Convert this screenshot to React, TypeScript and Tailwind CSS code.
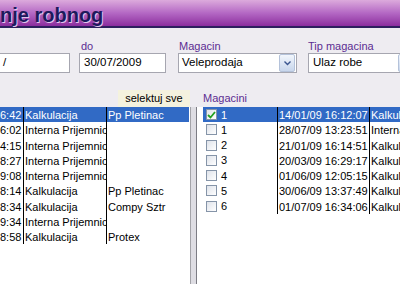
// Robno stanje - magacini / dokumenti prozor

const leftRows = [
  { time: '6:42', type: 'Kalkulacija', partner: 'Pp Pletinac' },
  { time: '6:02', type: 'Interna Prijemnica', partner: '' },
  { time: '4:15', type: 'Interna Prijemnica', partner: '' },
  { time: '8:27', type: 'Interna Prijemnica', partner: '' },
  { time: '9:08', type: 'Interna Prijemnica', partner: '' },
  { time: '8:14', type: 'Kalkulacija', partner: 'Pp Pletinac' },
  { time: '8:34', type: 'Kalkulacija', partner: 'Compy Sztr' },
  { time: '9:34', type: 'Interna Prijemnica', partner: '' },
  { time: '8:58', type: 'Kalkulacija', partner: 'Protex' },
];

const rightRows = [
  { checked: true, num: '1', date: '14/01/09 16:12:07', type: 'Kalkulacija' },
  { checked: false, num: '1', date: '28/07/09 13:23:51', type: 'Interna Prijemnica' },
  { checked: false, num: '2', date: '21/01/09 16:14:51', type: 'Kalkulacija' },
  { checked: false, num: '3', date: '20/03/09 16:29:17', type: 'Kalkulacija' },
  { checked: false, num: '4', date: '01/06/09 12:05:15', type: 'Kalkulacija' },
  { checked: false, num: '5', date: '30/06/09 13:37:49', type: 'Kalkulacija' },
  { checked: false, num: '6', date: '01/07/09 16:34:06', type: 'Kalkulacija' },
];

function ComboButton() {
  return (
    <div className="w-[16px] h-full mr-[1px] shrink-0 rounded-[2px] border border-[#b4c2da] bg-linear-to-b from-[#f2f6fc] to-[#c8d6ec] flex items-center justify-center">
      <svg width="9" height="6" viewBox="0 0 9 6">
        <polyline points="1.5,1.5 4.5,4.5 7.5,1.5" fill="none" stroke="#3a5590" strokeWidth="1.4" />
      </svg>
    </div>
  );
}

function Checkbox({ checked }: { checked: boolean }) {
  return (
    <div className="w-[11px] h-[11px] shrink-0 border border-[#8594a8] bg-linear-to-br from-[#dfe3ea] to-white flex items-center justify-center">
      {checked && (
        <svg width="9" height="8" viewBox="0 0 9 8">
          <polyline points="1,4 3.5,6.5 8,1" fill="none" stroke="#22a022" strokeWidth="1.8" />
        </svg>
      )}
    </div>
  );
}

export default function App() {
  return (
    <div className="w-[400px] h-[284px] overflow-hidden bg-[#eeecf1] flex flex-col font-['Liberation_Sans',Arial,sans-serif] text-black">
      {/* Title bar */}
      <div className="h-[28px] shrink-0 border-b-2 border-[#2d1f5e] bg-linear-to-b from-[#dcaadc] via-[#b468c4] to-[#8c2c9e] pt-[4px]">
        <div className="text-[20px] leading-[23px] font-bold text-[#1d195c] whitespace-nowrap [text-shadow:1px_1px_0_#e2c4ec]">
          nje robnog
        </div>
      </div>

      {/* Filter fields */}
      <div className="flex pt-[12px] text-[11px]">
        <div className="ml-[-11px] w-[81px] shrink-0 flex flex-col">
          <div className="h-[13px] leading-[13px]" />
          <div className="h-[20px] bg-white border border-[#a6a6b0] flex items-center pl-[13px] text-[11.5px]">/</div>
        </div>
        <div className="ml-[9px] w-[87px] shrink-0 flex flex-col">
          <div className="h-[13px] leading-[13px] pl-[2px] text-[#5c2d91]">do</div>
          <div className="h-[20px] bg-white border border-[#a6a6b0] flex items-center pl-[4px] text-[11.5px]">30/07/2009</div>
        </div>
        <div className="ml-[12px] w-[119px] shrink-0 flex flex-col">
          <div className="h-[13px] leading-[13px] pl-[1px] text-[#5c2d91]">Magacin</div>
          <div className="h-[20px] bg-white border border-[#a6a6b0] flex items-center text-[11.5px]">
            <span className="flex-1 pl-[3px]">Veleprodaja</span>
            <ComboButton />
          </div>
        </div>
        <div className="ml-[11px] w-[108px] shrink-0 flex flex-col">
          <div className="h-[13px] leading-[13px] text-[#5c2d91]">Tip magacina</div>
          <div className="h-[20px] bg-white border border-[#a6a6b0] flex items-center text-[11.5px]">
            <span className="flex-1 pl-[4px]">Ulaz robe</span>
            <ComboButton />
          </div>
        </div>
      </div>

      {/* Lists */}
      <div className="flex flex-1 mt-[17px] min-h-0 text-[11px]">
        {/* Left list */}
        <div className="w-[191px] shrink-0 flex flex-col">
          <div className="h-[17px] flex justify-end pr-[1px]">
            <div className="w-[72px] bg-[#f4f2de] leading-[17px] text-center">selektuj sve</div>
          </div>
          <div className="flex-1 bg-white border-r border-[#a3a3a8] pr-[1px]">
            {leftRows.map((r, i) => (
              <div
                key={i}
                className={`flex h-[15.25px] leading-[15.25px] ${i === 0 ? 'bg-[#316ac5] text-white' : ''}`}
              >
                <div className="w-[24px] shrink-0 border-r border-black whitespace-nowrap overflow-hidden pt-[1px]">{r.time}</div>
                <div className="w-[83px] shrink-0 border-r border-black whitespace-nowrap overflow-hidden pl-[1px] pt-[1px]">{r.type}</div>
                <div className="flex-1 whitespace-nowrap overflow-hidden pl-[1px] pt-[1px]">{r.partner}</div>
              </div>
            ))}
          </div>
        </div>

        {/* Gap */}
        <div className="w-[5px] shrink-0 flex flex-col">
          <div className="h-[17px]" />
          <div className="flex-1 bg-[#dedde3]" />
        </div>

        {/* Right list */}
        <div className="flex-1 min-w-0 flex flex-col">
          <div className="h-[17px] pl-[7px] leading-[17px] text-[#5c2d91]">Magacini</div>
          <div className="flex-1 bg-white border-l border-[#7c7c84] pl-[6px] overflow-hidden">
            {rightRows.map((r, i) => (
              <div
                key={i}
                className={`flex h-[15.25px] leading-[15.25px] ${i === 0 ? 'bg-[#316ac5] text-white' : ''}`}
              >
                <div className="w-[75px] shrink-0 border-r border-black flex items-center pl-[3px]">
                  <Checkbox checked={r.checked} />
                  <span className="ml-[4px] pt-[1px]">{r.num}</span>
                </div>
                <div className="w-[92px] shrink-0 border-r border-black whitespace-nowrap overflow-hidden pl-[1px] pt-[1px]">{r.date}</div>
                <div className="flex-1 whitespace-nowrap overflow-hidden pl-[1px] pt-[1px]">{r.type}</div>
              </div>
            ))}
          </div>
        </div>
      </div>
    </div>
  );
}
